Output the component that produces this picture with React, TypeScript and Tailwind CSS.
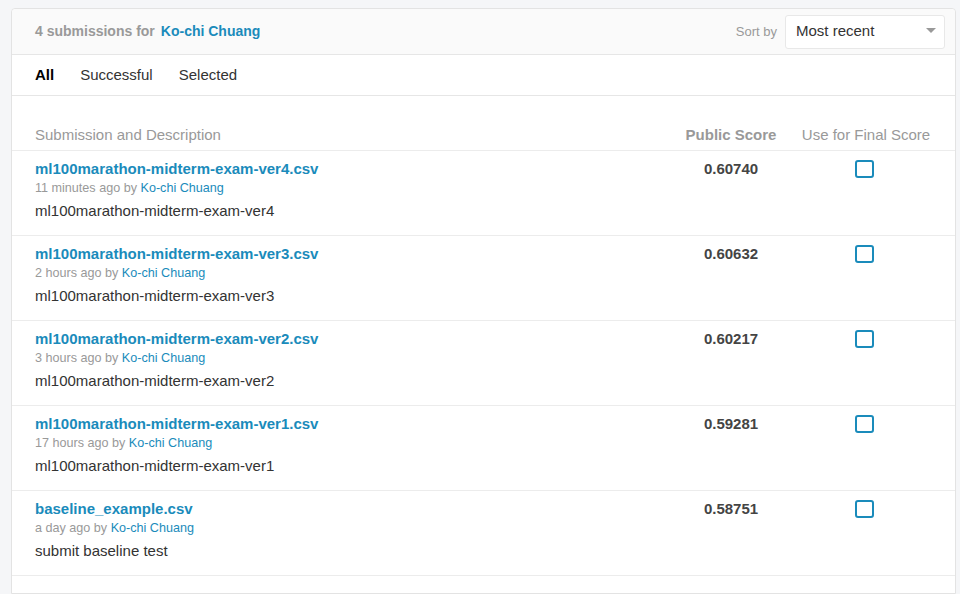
import React from "react";

interface Submission {
  file: string;
  ago: string;
  description: string;
  score: string;
}

const SUBMISSIONS: Submission[] = [
  { file: "ml100marathon-midterm-exam-ver4.csv", ago: "11 minutes ago", description: "ml100marathon-midterm-exam-ver4", score: "0.60740" },
  { file: "ml100marathon-midterm-exam-ver3.csv", ago: "2 hours ago", description: "ml100marathon-midterm-exam-ver3", score: "0.60632" },
  { file: "ml100marathon-midterm-exam-ver2.csv", ago: "3 hours ago", description: "ml100marathon-midterm-exam-ver2", score: "0.60217" },
  { file: "ml100marathon-midterm-exam-ver1.csv", ago: "17 hours ago", description: "ml100marathon-midterm-exam-ver1", score: "0.59281" },
  { file: "baseline_example.csv", ago: "a day ago", description: "submit baseline test", score: "0.58751" },
];

const App: React.FC = () => {
  return (
    <div className="min-h-[594px] bg-[#f5f6f8] pt-[8px] pl-[11px] pr-[4px] font-['Liberation_Sans',Arial,sans-serif]">
      <div className="bg-white border border-[#e3e3e3] rounded-tl-[4px] rounded-tr-[4px] min-h-[586px]">
        {/* Header */}
        <div className="h-[46px] bg-[#fafafa] border-b border-[#e6e6e6] flex items-center justify-between pl-[23px] pr-[10px] rounded-t-[4px]">
          <div className="text-[14px] font-bold pb-[1px]">
            <span className="text-[#999]">4 submissions for</span>
            <a className="text-[#1a8bbb] ml-[6px]">Ko-chi Chuang</a>
          </div>
          <div className="flex items-center">
            <span className="text-[13px] text-[#999] mr-[8px]">Sort by</span>
            <div className="w-[160px] h-[34px] bg-white border border-[#e8e8e8] rounded-[3px] flex items-center justify-between pl-[10px] pr-[8px] pb-[1px]">
              <span className="text-[15px] text-[#333]">Most recent</span>
              <svg width="10" height="6" viewBox="0 0 10 6">
                <path d="M0 0 L10 0 L5 5 Z" fill="#999" />
              </svg>
            </div>
          </div>
        </div>

        {/* Tabs */}
        <div className="h-[41px] border-b border-[#e6e6e6] flex items-center pl-[23px] text-[15px] text-[#333]">
          <span className="font-bold text-black mr-[26px]">All</span>
          <span className="mr-[26px]">Successful</span>
          <span>Selected</span>
        </div>

        {/* Table header */}
        <div className="h-[55px] border-b border-[#ececec] flex items-end pb-[4px] pl-[23px] pr-[14px] text-[15px] text-[#999]">
          <div className="flex-1">Submission and Description</div>
          <div className="w-[120px] text-center font-bold">Public Score</div>
          <div className="w-[150px] text-center">Use for Final Score</div>
        </div>

        {/* Rows */}
        {SUBMISSIONS.map((s, idx) => (
          <div key={idx} className="h-[85px] border-b border-[#ececec] flex pl-[23px] pr-[14px] pt-[8px]">
            <div className="flex-1">
              <div className="text-[15px] leading-[20px] font-bold text-[#1a8bbb]">{s.file}</div>
              <div className="text-[12.6px] leading-[18px] text-[#999]">
                {s.ago} by <span className="text-[#1a8bbb]">Ko-chi Chuang</span>
              </div>
              <div className="mt-[4px] text-[15px] leading-[20px] text-[#333]">{s.description}</div>
            </div>
            <div className="w-[120px] text-center text-[15px] leading-[20px] font-bold text-[#444]">{s.score}</div>
            <div className="w-[150px] flex justify-center pt-[1px] pr-[4px]">
              <div className="w-[19px] h-[18px] border-2 border-[#1a8bbb] rounded-[3px]"></div>
            </div>
          </div>
        ))}
      </div>
    </div>
  );
};

export default App;
